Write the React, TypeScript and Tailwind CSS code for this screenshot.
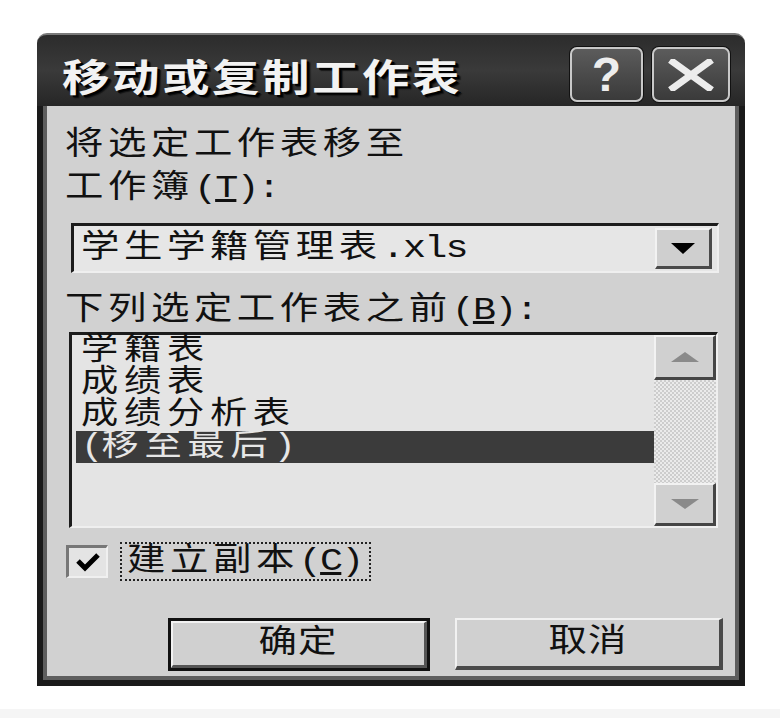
import type { ReactNode } from "react";

const txt = "font-['Liberation_Mono','Noto_Sans_CJK_SC',monospace]";

function W({ children, center = false }: { children: ReactNode; center?: boolean }) {
  return (
    <span className={center ? "inline-block origin-center scale-x-[1.2]" : "inline-block origin-left scale-x-[1.2]"}>
      {children}
    </span>
  );
}

function L({ children }: { children: ReactNode }) {
  return <span className="tracking-[-1.5px]">{children}</span>;
}

export default function App() {
  return (
    <div className="min-h-[722px] bg-white">
      <div className="pt-[33px] pl-[37px]">
        <div className="w-[708px]">
          {/* Title bar */}
          <div className="h-[73px] rounded-t-[10px] border-t-2 border-[#7a7a7a] bg-gradient-to-b from-[#2c2c2c] via-[#3a3a3a] to-[#262626] flex items-center pt-[8px] pl-[25px] pr-[15px]">
            <span className="inline-block origin-left scale-x-[1.25] font-['Noto_Sans_CJK_SC',sans-serif] font-bold text-[38px] leading-none tracking-[2px] text-[#f2f2f2] [text-shadow:2px_2px_0_#000,3px_3px_1px_#111]">
              移动或复制工作表
            </span>
            <div className="ml-auto flex gap-[9px]">
              <div className="w-[73px] h-[55px] rounded-[7px] border-2 border-[#c9c9c9] ring-1 ring-[#111] bg-gradient-to-b from-[#5c5c5c] to-[#3a3a3a] flex items-center justify-center">
                <span className="font-['Liberation_Sans',sans-serif] font-bold text-[48px] leading-none text-[#ededed]">?</span>
              </div>
              <div className="w-[78px] h-[55px] rounded-[7px] border-2 border-[#c9c9c9] ring-1 ring-[#111] bg-gradient-to-b from-[#5c5c5c] to-[#3a3a3a] flex items-center justify-center">
                <svg width="46" height="32" viewBox="0 0 46 32">
                  <path d="M5 3 L41 29 M41 3 L5 29" stroke="#ececec" strokeWidth="7" strokeLinecap="square" />
                </svg>
              </div>
            </div>
          </div>

          {/* Body with frame */}
          <div className="border-x-[6px] border-b-[6px] border-[#1a1a1a]">
            <div className="border-x-[4px] border-b-[4px] border-[#5e5e5e] bg-[#d1d1d1] h-[574px] flex flex-col pt-[20px] text-[#111]">
              <div className={`${txt} pl-[18px] text-[32px] leading-[40px] tracking-[3.8px]`}>
                <W>将选定工作表移至</W>
              </div>
              <div className={`${txt} pl-[18px] mt-[3px] text-[32px] leading-[40px] tracking-[3.8px]`}>
                <W>
                  工作簿<L>(<span className="underline">T</span>):</L>
                </W>
              </div>

              {/* Combo */}
              <div className="ml-[24px] mt-[14px] w-[648px] h-[50px] border-t-[3px] border-l-[3px] border-[#1c1c1c] border-r-2 border-b-2 border-r-[#efefef] border-b-[#efefef] bg-[#e6e6e6] flex items-center pl-[7px] pr-[5px]">
                <span className={`${txt} text-[32px] leading-none tracking-[3.8px]`}>
                  <W>
                    学生学籍管理表<L>.xls</L>
                  </W>
                </span>
                <div className="ml-auto w-[57px] h-[41px] bg-[#cfcfcf] border-t-2 border-l-2 border-[#f2f2f2] border-r-[3px] border-b-[3px] border-r-[#4a4a4a] border-b-[#4a4a4a] flex items-center justify-center">
                  <svg width="24" height="11" viewBox="0 0 24 11">
                    <path d="M0 0 H24 L12 11 Z" fill="#000" />
                  </svg>
                </div>
              </div>

              <div className={`${txt} pl-[18px] mt-[18px] text-[32px] leading-[40px] tracking-[3.8px]`}>
                <W>
                  下列选定工作表之前<L>(<span className="underline">B</span>):</L>
                </W>
              </div>

              {/* Listbox */}
              <div className="ml-[22px] mt-[1px] w-[649px] h-[196px] border-t-[3px] border-l-[3px] border-[#1c1c1c] border-r-2 border-b-2 border-r-[#efefef] border-b-[#efefef] bg-[#e4e4e4] flex">
                <div className={`${txt} flex-1 pl-[4px] text-[31px] leading-[32px] tracking-[4.8px]`}>
                  <div className="pl-[5px] h-[32px]"><W>学籍表</W></div>
                  <div className="pl-[5px] h-[32px]"><W>成绩表</W></div>
                  <div className="pl-[5px] h-[32px]"><W>成绩分析表</W></div>
                  <div className="pl-[5px] h-[32px] bg-[#3b3b3b] text-[#e6e6e6]">
                    <W>
                      <L>(</L>移至最后<L>)</L>
                    </W>
                  </div>
                </div>
                <div className="w-[62px] flex flex-col">
                  <div className="h-[45px] bg-[#d0d0d0] border-t-2 border-l-2 border-[#f2f2f2] border-r-[3px] border-b-[3px] border-r-[#454545] border-b-[#454545] flex items-center justify-center">
                    <svg width="28" height="10" viewBox="0 0 28 10">
                      <path d="M0 10 H28 L14 0 Z" fill="#8a8a8a" />
                    </svg>
                  </div>
                  <div className="flex-1 bg-[repeating-conic-gradient(#cdcdcd_0%_25%,#ebebeb_0%_50%)] bg-[length:4px_4px]" />
                  <div className="h-[43px] bg-[#d0d0d0] border-t-2 border-l-2 border-[#f2f2f2] border-r-[3px] border-b-[3px] border-r-[#454545] border-b-[#454545] flex items-center justify-center">
                    <svg width="28" height="10" viewBox="0 0 28 10">
                      <path d="M0 0 H28 L14 10 Z" fill="#8a8a8a" />
                    </svg>
                  </div>
                </div>
              </div>

              {/* Checkbox row */}
              <div className="ml-[19px] mt-[14px] flex items-center">
                <div className="w-[42px] h-[33px] border-t-[3px] border-l-[3px] border-[#777] border-r-2 border-b-2 border-r-[#f0f0f0] border-b-[#f0f0f0] bg-[#e4e4e4] flex items-center justify-center">
                  <svg width="26" height="20" viewBox="0 0 26 20">
                    <path d="M3 9 L10 16 L23 3" stroke="#000" strokeWidth="5" fill="none" />
                  </svg>
                </div>
                <div className={`${txt} ml-[12px] w-[251px] h-[39px] border-2 border-dotted border-[#222] pl-[5px] text-[32px] leading-[35px] tracking-[3.8px]`}>
                  <W>
                    建立副本<L>(<span className="underline">C</span>)</L>
                  </W>
                </div>
              </div>

              {/* Buttons */}
              <div className="mt-[37px] flex">
                <div className="ml-[121px] w-[262px] h-[53px] border-[3px] border-[#111] bg-[#d0d0d0]">
                  <div className="h-full border-t-2 border-l-2 border-[#f2f2f2] border-r-[3px] border-b-[3px] border-r-[#555] border-b-[#555] flex items-center justify-center">
                    <span className={`${txt} text-[32px] leading-none tracking-[1px]`}>
                      <W center>确定</W>
                    </span>
                  </div>
                </div>
                <div className="ml-[25px] w-[268px] h-[52px] bg-[#d0d0d0] border-t-2 border-l-2 border-[#f2f2f2] border-r-[4px] border-b-[4px] border-r-[#4a4a4a] border-b-[#4a4a4a] flex items-center justify-center">
                  <span className={`${txt} text-[32px] leading-none tracking-[1px]`}>
                    <W center>取消</W>
                  </span>
                </div>
              </div>
            </div>
          </div>
        </div>
      </div>
      <div className="mt-[23px] h-[9px] bg-[#f5f5f5]" />
    </div>
  );
}
